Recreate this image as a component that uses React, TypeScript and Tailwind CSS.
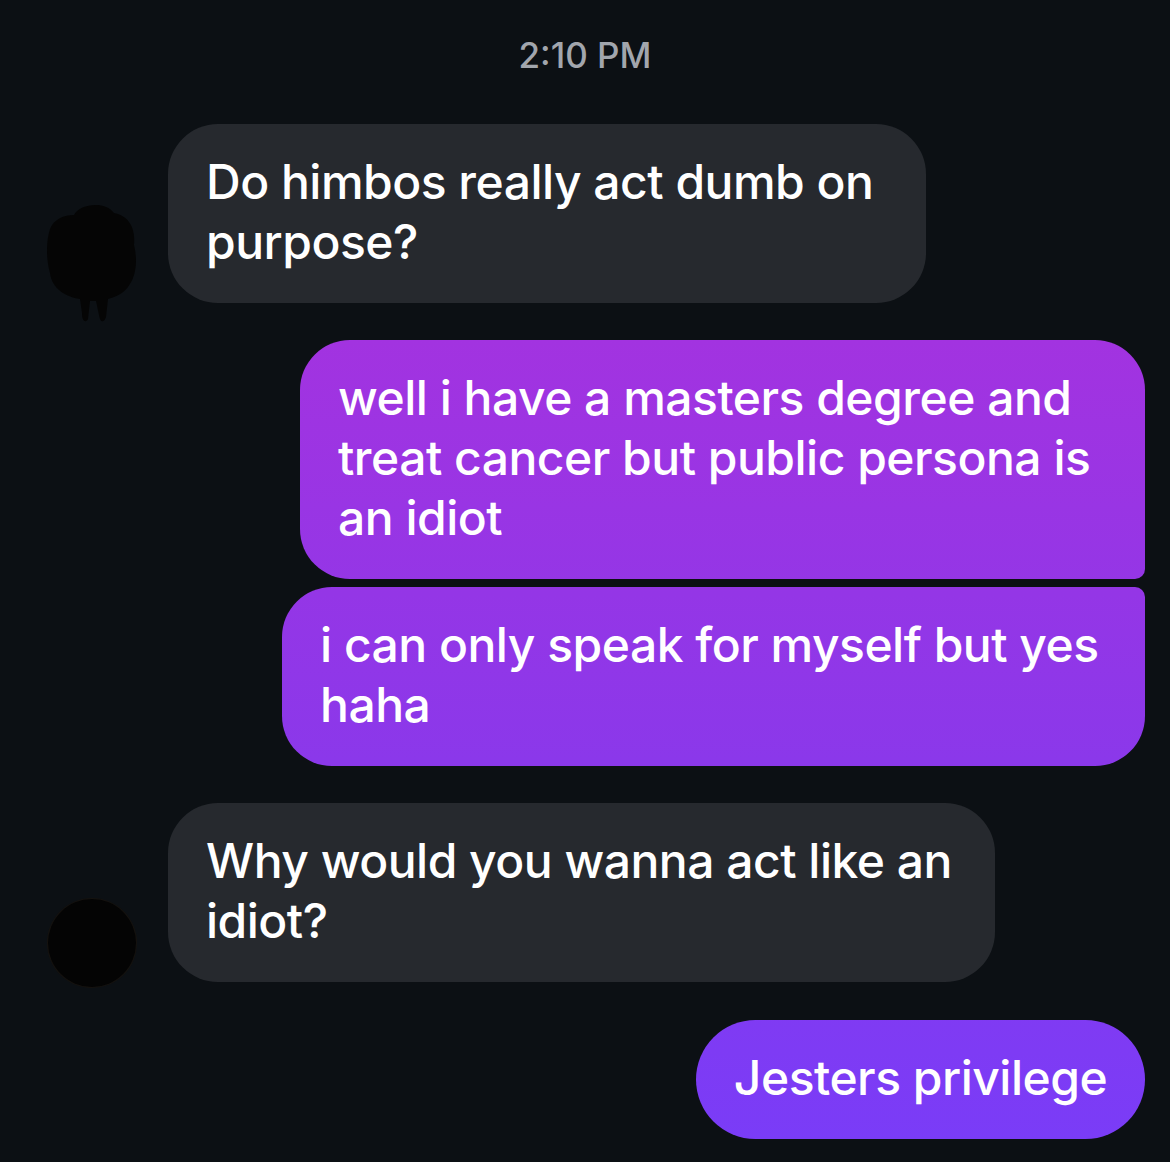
import React from "react";

const purple =
  "bg-fixed bg-[linear-gradient(to_bottom,#b12ed9_0px,#a233e0_340px,#8b38ea_760px,#7a3cf7_1140px)]";

function BlobAvatar() {
  return (
    <svg width="96" height="124" viewBox="0 0 96 124" className="shrink-0 -mb-[22px]">
      <path
        d="M30 14 C36 2 62 0 70 12 C82 14 92 24 90 44 C94 60 92 76 84 86 C78 94 70 96 64 98 L62 116 C60 122 56 122 55 114 L52 100 L46 100 L44 118 C42 122 38 121 38 112 L36 98 C22 96 8 88 6 72 C2 58 2 40 6 28 C10 18 20 14 30 14 Z"
        fill="#050505"
      />
    </svg>
  );
}

function CircleAvatar() {
  return (
    <div className="w-[88px] h-[88px] rounded-full bg-[#040404] shrink-0 -mb-[5px] shadow-[0_0_0_1px_#15120f]" />
  );
}

function Grey({ lines, w }: { lines: string[]; w: string }) {
  return (
    <div className={`${w} bg-[#26292e] rounded-[50px] px-[38px] pt-[28px] pb-[31px] text-white`}>
      {lines.map((l) => (
        <div key={l} className="whitespace-nowrap">{l}</div>
      ))}
    </div>
  );
}

export default function App() {
  return (
    <div
      className="min-h-screen bg-[#0c1014] text-[48px] font-medium leading-[60px] tracking-[-0.5px] pb-[25px]"
      style={{ fontFamily: "Inter, 'Noto Sans', sans-serif" }}
    >
      <div className="h-[110px] flex items-center justify-center text-[35px] leading-none text-[#a2a6ad] tracking-normal">
        2:10 PM
      </div>

      <div className="flex flex-col mt-[14px]">
        <div className="flex items-end gap-[28px] pl-[44px]">
          <BlobAvatar />
          <Grey w="w-[758px]" lines={["Do himbos really act dumb on", "purpose?"]} />
        </div>

        <div className="flex flex-col items-end pr-[25px] mt-[37px] gap-[8px] text-white">
          <div className={`w-[845px] ${purple} rounded-[50px] rounded-br-[10px] pl-[38px] pt-[28px] pb-[31px]`}>
            <div className="whitespace-nowrap">well i have a masters degree and</div>
            <div className="whitespace-nowrap">treat cancer but public persona is</div>
            <div className="whitespace-nowrap">an idiot</div>
          </div>
          <div className={`w-[863px] ${purple} rounded-[50px] rounded-tr-[10px] pl-[38px] pt-[28px] pb-[31px]`}>
            <div className="whitespace-nowrap">i can only speak for myself but yes</div>
            <div className="whitespace-nowrap">haha</div>
          </div>
        </div>

        <div className="flex items-end gap-[32px] pl-[48px] mt-[37px]">
          <CircleAvatar />
          <Grey w="w-[827px]" lines={["Why would you wanna act like an", "idiot?"]} />
        </div>

        <div className="flex justify-end pr-[25px] mt-[38px] text-white">
          <div className={`w-[449px] ${purple} rounded-[60px] pt-[28px] pb-[31px] text-center`}>
            Jesters privilege
          </div>
        </div>
      </div>
    </div>
  );
}
